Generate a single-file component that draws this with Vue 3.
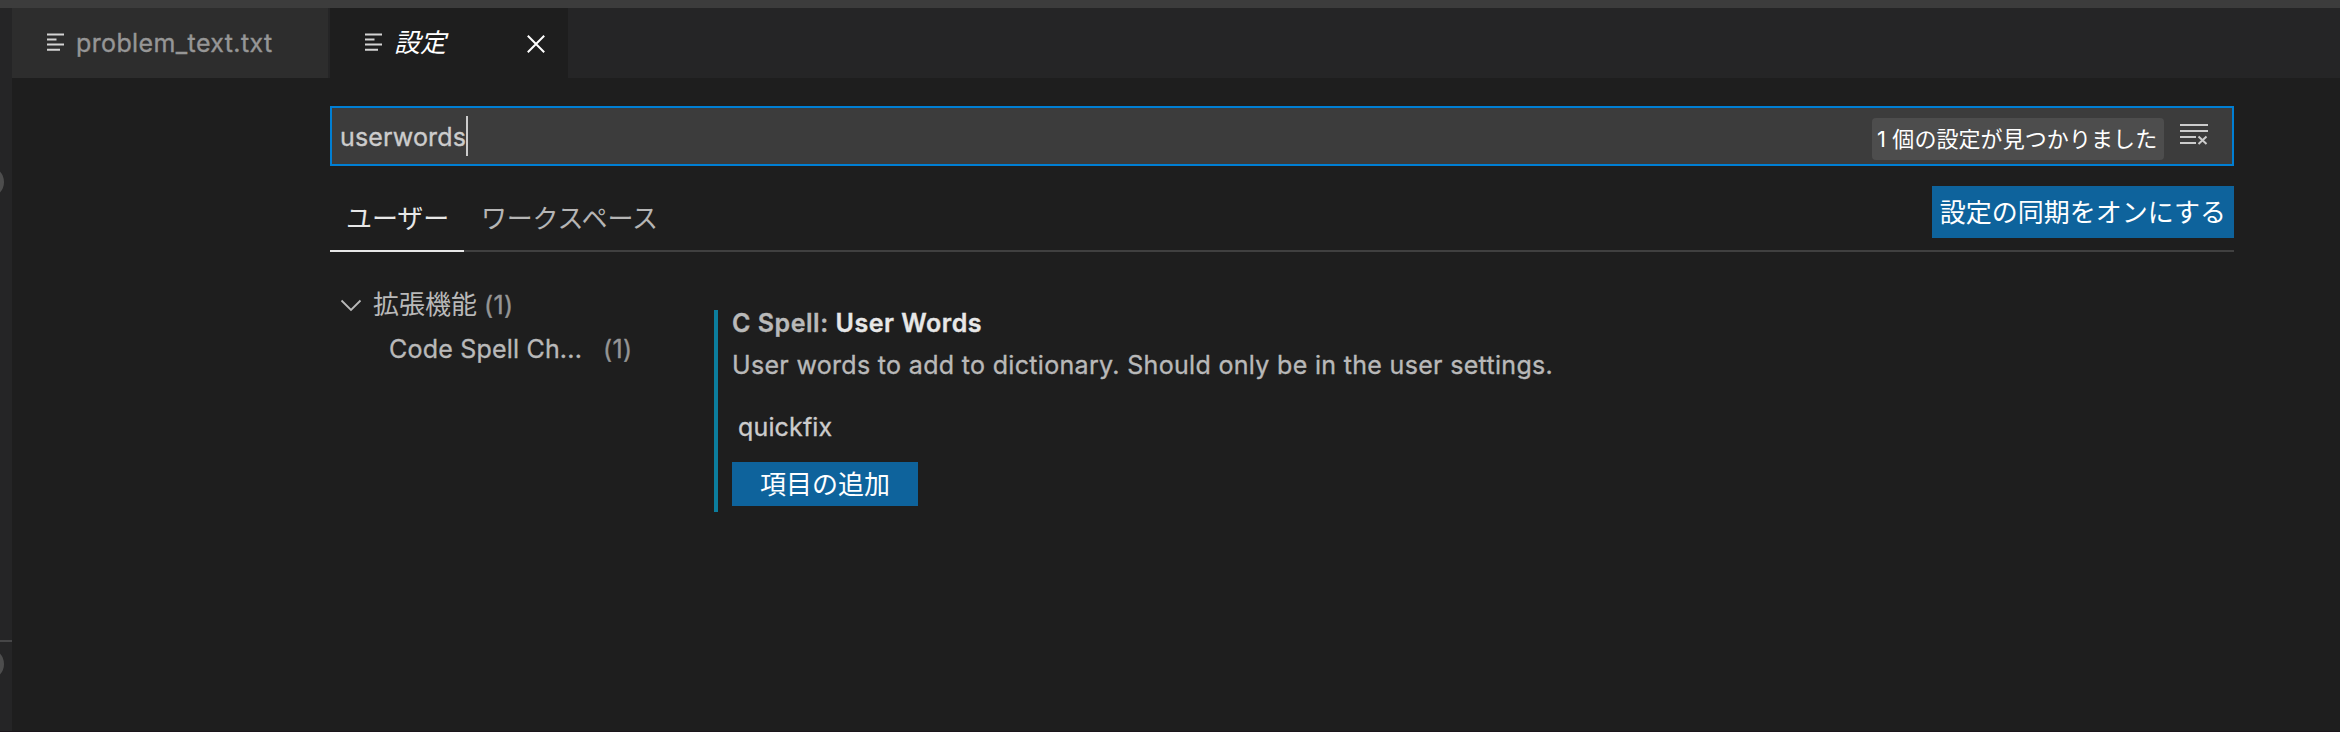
<script setup>
</script>

<template>
  <div class="window">
    <div class="titlebar"></div>
    <div class="main">
      <aside class="sidebar">
        <span class="badge first"></span>
        <span class="rule"></span>
        <span class="badge second"></span>
      </aside>
      <section class="editor">
        <nav class="tabs">
          <div class="tab">
            <svg class="lines" width="18" height="19" viewBox="0 0 18 19"><path d="M0 1.5H17M0 6.5H9.5M0 11.5H17M0 16.7H13" /></svg>
            <span class="name">problem_text.txt</span>
          </div>
          <div class="tab active">
            <svg class="lines" width="18" height="19" viewBox="0 0 18 19"><path d="M0 1.5H17M0 6.5H9.5M0 11.5H17M0 16.7H13" /></svg>
            <span class="title">設定</span>
            <svg class="close" width="18" height="18" viewBox="0 0 18 18"><path d="M.8.8 17.2 17.2M17.2.8.8 17.2" /></svg>
          </div>
        </nav>
        <div class="settings">
          <div class="search">
            <span class="query">userwords</span><span class="caret"></span>
            <span class="count">1 個の設定が見つかりました</span>
            <svg class="clear" width="28" height="21" viewBox="0 0 28 21"><path d="M0 1H28M0 7H28M0 13H16M0 19H16" /><path d="M18.5 12.5 26.5 20M26.5 12.5 18.5 20" /></svg>
          </div>
          <div class="scopes">
            <div class="scope on">ユーザー</div>
            <div class="scope">ワークスペース</div>
            <button class="sync">設定の同期をオンにする</button>
          </div>
          <div class="body">
            <div class="toc">
              <div class="row">
                <svg class="chevron" width="22" height="13" viewBox="0 0 22 13"><path d="M1.5 1.5 11 11 20.5 1.5" /></svg>
                <span class="group">拡張機能</span><span class="num">(1)</span>
              </div>
              <div class="row child">
                <span class="item">Code Spell Ch...</span><span class="num">(1)</span>
              </div>
            </div>
            <div class="setting">
              <div class="heading"><span>C Spell: </span><span class="key">User Words</span></div>
              <div class="desc">User words to add to dictionary. Should only be in the user settings.</div>
              <div class="value">quickfix</div>
              <button class="add">項目の追加</button>
            </div>
          </div>
        </div>
      </section>
    </div>
    <div class="edge"></div>
  </div>
</template>

<style>
body { margin: 0; background: #1e1e1e; }
</style>

<style scoped>
* { box-sizing: border-box; }
.window { width: 2340px; height: 732px; overflow: hidden; display: flex; flex-direction: column; background: #1e1e1e; color: #ccc; font: 400 25px/36px Inter, "Noto Sans CJK JP", sans-serif; white-space: nowrap; }
.name, .query, .num, .item, .desc, .value, .heading { -webkit-text-stroke: .35px currentColor; }
.titlebar { height: 8px; background: #3c3c3c; }
.main { flex: 1; display: flex; min-height: 0; }
.edge { height: 1px; background: #1b151b; }
.sidebar { width: 12px; background: #252526; overflow: hidden; display: flex; flex-direction: column; }
.badge { flex: none; width: 32px; height: 32px; margin-left: -28px; border-radius: 50%; background: #4d4d4d; }
.first { margin-top: 158px; }
.rule { flex: none; height: 2px; margin-top: 442px; background: #464647; }
.second { margin-top: 6px; }
.editor { flex: 1; }
.tabs { height: 70px; display: flex; background: #252526; }
.tab { width: 318px; padding-left: 35px; display: flex; align-items: center; background: #2d2d2d; border-right: 2px solid #252526; color: #969696; }
.tab.active { width: 238px; background: #1e1e1e; color: #fff; border: 0; }
svg { fill: none; flex: none; display: block; }
.lines { stroke: #d4d4d4; stroke-width: 2; margin-top: -1px; }
.tab .name { margin-left: 11px; letter-spacing: .38px; }
.title { margin-left: 11px; font-size: 26px; font-style: italic; font-weight: 400; }
.close { margin: 2px 0 0 81px; stroke: #fff; stroke-width: 2; }
.settings { width: 1904px; margin: 28px 0 0 318px; }
.search { height: 60px; border: 2px solid #007fd4; background: #3c3c3c; display: flex; align-items: center; padding-left: 8px; }
.query { width: 126px; margin-top: 1px; letter-spacing: .15px; }
.caret { width: 2px; height: 40px; background: #ccc; }
.count { margin-left: auto; width: 292px; height: 42px; line-height: 42px; margin-top: 6px; border-radius: 4px; background: #4d4d4d; color: #fff; font-size: 22px; padding-left: 5px; letter-spacing: .08px; }
.clear { margin: -4px 24px 0 16px; stroke: #ccc; stroke-width: 2; }
.scopes { height: 86px; display: flex; border-bottom: 2px solid #404040; }
.scope { height: 86px; padding-top: 35px; margin-right: 17px; font-size: 26px; color: #b5b5b5; letter-spacing: -.2px; }
.scope.on { width: 134px; padding-left: 16px; color: #e7e7e7; border-bottom: 2px solid #e7e7e7; letter-spacing: -.1px; }
button { border: 0; padding: 0 0 3px; background: #0e639c; color: #fff; font: 26px Inter, "Noto Sans CJK JP", sans-serif; }
.sync { margin: 20px 0 0 auto; width: 302px; height: 52px; }
.body { display: flex; padding-top: 31px; }
.toc { width: 384px; color: #b9b9b9; }
.row { height: 44px; line-height: 44px; display: flex; align-items: center; }
.chevron { margin: 0 11px 0 10px; stroke: #b9b9b9; stroke-width: 1.8; }
.group { font-size: 26px; }
.num { color: #959595; margin-left: 7px; letter-spacing: .3px; }
.child { padding-left: 59px; }
.item { letter-spacing: .2px; }
.child .num { margin-left: 21px; }
.setting { margin-top: 27px; height: 202px; border-left: 4px solid #0c7d9d; padding-left: 14px; }
.heading { height: 26px; line-height: 26px; font-weight: 600; white-space: pre; color: #b9b9b9; letter-spacing: .53px; }
.key { color: #e7e7e7; }
.desc { margin-top: 11px; color: #b9b9b9; letter-spacing: .32px; }
.value { margin: 26px 0 0 6px; color: #ccc; letter-spacing: .15px; }
.add { display: block; width: 186px; height: 44px; margin-top: 17px; }
</style>
